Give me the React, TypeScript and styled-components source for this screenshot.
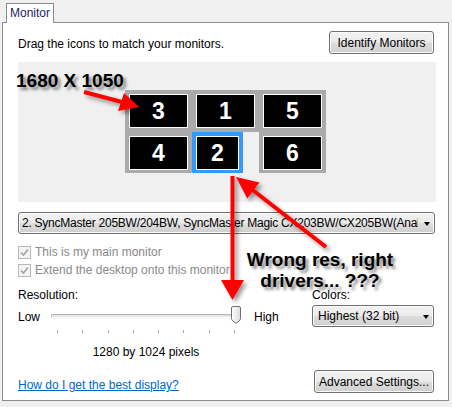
import React from 'react';
import styled, { createGlobalStyle } from 'styled-components';

const Global = createGlobalStyle`
  html, body { margin: 0; padding: 0; background: #f0f0f0; }
  body {
    font-family: "Liberation Sans", Arial, sans-serif;
    font-size: 12px;
    color: #000;
  }
  * { box-sizing: border-box; }
`;

const Page = styled.div`
  position: relative;
  width: 452px;
  height: 407px;
  overflow: hidden;
  background: #f0f0f0;
`;

const TabStrip = styled.div`
  height: 22px;
  display: flex;
  align-items: flex-end;
  padding-left: 6px;
`;

const Tab = styled.div`
  position: relative;
  z-index: 1;
  width: 48px;
  height: 20px;
  margin-bottom: -1px;
  padding: 0 0 2px 3px;
  display: flex;
  align-items: center;
  background: #fff;
  border: 1px solid #898c95;
  border-bottom: none;
  color: #1e1e5a;
`;

const Panel = styled.div`
  margin-left: 2px;
  width: 447px;
  height: 379px;
  border: 1px solid #898c95;
  background: #fff;
  padding: 0 12px 0 15px;
  display: flex;
  flex-direction: column;
`;

const HeaderRow = styled.div`
  margin-top: 8px;
  display: flex;
  justify-content: space-between;
  align-items: center;
`;

const Label = styled.span<{ $muted?: boolean }>`
  line-height: 15px;
  white-space: nowrap;
  color: ${(p) => (p.$muted ? '#8a8a8a' : '#000')};
`;

const Intro = styled(Label)`
  margin-top: 3px;
`;

const Button = styled.button<{ $w: number }>`
  width: ${(p) => p.$w}px;
  height: 23px;
  margin-right: 2px;
  padding: 0;
  border: 1px solid #707070;
  border-radius: 3px;
  background: linear-gradient(#f2f2f2 0%, #ebebeb 48%, #dddddd 52%, #cfcfcf 100%);
  box-shadow: inset 0 0 0 1px #fbfbfb;
  font-family: "Liberation Sans", Arial, sans-serif;
  font-size: 12px;
  color: #000;
`;

const Arrangement = styled.div`
  margin-top: 8px;
  height: 140px;
  background: #f0f0f0;
  padding: 28px 0 0 107px;
  display: flex;
  flex-direction: column;
`;

const TileRow = styled.div<{ $h: number }>`
  display: flex;
  height: ${(p) => p.$h}px;
`;

const Tile = styled.div<{ $w: number; $selected?: boolean; $pb: number }>`
  width: ${(p) => p.$w}px;
  padding: 4px 4px ${(p) => p.$pb}px 4px;
  background: ${(p) => (p.$selected ? '#3399ff' : '#aaaaaa')};
  display: flex;
`;

const Gap = styled.div<{ $w: number }>`
  width: ${(p) => p.$w}px;
`;

const Screen = styled.div`
  flex: 1;
  background: #000;
  border: 1px solid #fff;
  display: flex;
  align-items: center;
  justify-content: center;
  color: #fff;
  font-family: "Liberation Sans", Arial, sans-serif;
  font-weight: bold;
  font-size: 23px;
  line-height: 1;
`;

const Select = styled.div<{ $w?: number }>`
  height: 22px;
  ${(p) => (p.$w ? `width: ${p.$w}px;` : '')}
  border: 1px solid #707070;
  border-radius: 3px;
  background: linear-gradient(#f2f2f2 0%, #ebebeb 48%, #dddddd 52%, #cfcfcf 100%);
  box-shadow: inset 0 0 0 1px #fbfbfb;
  display: flex;
  align-items: center;
  padding: 0 4px 0 4px;
`;

const MonitorSelect = styled(Select)`
  margin-top: 10px;
  margin-right: 1px;
  padding-left: 3px;
`;

const SelectText = styled.span<{ $tight?: boolean }>`
  flex: 1;
  overflow: hidden;
  white-space: nowrap;
  line-height: 15px;
  ${(p) => (p.$tight ? 'letter-spacing: -0.25px;' : '')}
`;

const Caret = styled.span`
  width: 0;
  height: 0;
  margin: 1px 0 0 6px;
  border-left: 3.5px solid transparent;
  border-right: 3.5px solid transparent;
  border-top: 4px solid #000;
`;

const CheckList = styled.div`
  margin-top: 9px;
  display: flex;
  flex-direction: column;
`;

const CheckRow = styled.div`
  height: 18px;
  display: flex;
  align-items: center;
  gap: 4px;
`;

const CheckBox = styled.span`
  width: 13px;
  height: 13px;
  border: 1px solid #b8b8b8;
  background: #f4f4f4;
  display: flex;
  align-items: center;
  justify-content: center;
`;

const LowerGrid = styled.div`
  margin-top: 7px;
  display: grid;
  grid-template-columns: 294px 122px;
  grid-template-rows: 18px auto;
`;

const GridLabel = styled.div`
  display: flex;
  align-items: center;
  line-height: 15px;
`;

const SliderColumn = styled.div`
  margin-top: 1px;
  display: flex;
  flex-direction: column;
`;

const SliderRow = styled.div`
  height: 22px;
  display: flex;
  align-items: center;
`;

const SideLabel = styled.span<{ $w?: number; $ml?: number }>`
  ${(p) => (p.$w ? `width: ${p.$w}px;` : '')}
  margin-left: ${(p) => p.$ml ?? 0}px;
  line-height: 15px;
  padding-top: 2px;
`;

const Track = styled.div`
  position: relative;
  width: 190px;
  height: 4px;
  border-top: 1px solid #b4b4b4;
  border-left: 1px solid #c8c8c8;
  background: #e6e6e6;
  border-bottom: 1px solid #ffffff;
  box-shadow: 0 1px 0 #f4f4f4;
`;

const Thumb = styled.svg`
  position: absolute;
  top: -9px;
  width: 10px;
  height: 18px;
`;

const Ticks = styled.div`
  margin: 3px 0 0 39px;
  width: 178px;
  height: 3px;
  display: flex;
  justify-content: space-between;
`;

const Tick = styled.span`
  width: 1px;
  height: 3px;
  background: #a7a7a7;
`;

const PixelText = styled.div`
  margin: 12px 0 0 33px;
  width: 190px;
  text-align: center;
  line-height: 15px;
`;

const ColorSelect = styled(Select)`
  margin-top: 1px;
  padding-left: 5px;
`;

const BottomRow = styled.div`
  margin-top: 10px;
  display: flex;
  justify-content: space-between;
  align-items: flex-end;
`;

const Link = styled.a`
  color: #0066cc;
  text-decoration: underline;
  line-height: 15px;
  cursor: pointer;
`;

const Overlay = styled.svg`
  position: absolute;
  left: 0;
  top: 0;
  width: 452px;
  height: 407px;
  pointer-events: none;
`;

const Note = styled.div<{ $x: number; $y: number; $w: number; $align?: string }>`
  position: absolute;
  left: ${(p) => p.$x}px;
  top: ${(p) => p.$y}px;
  width: ${(p) => p.$w}px;
  text-align: ${(p) => p.$align ?? 'center'};
  font-family: "Liberation Sans", Arial, sans-serif;
  font-weight: bold;
  font-size: 19px;
  line-height: 21px;
  color: #000;
  text-shadow: 3px 3px 3px rgba(0, 0, 0, 0.45);
  white-space: nowrap;
  pointer-events: none;
`;

const ticks = Array.from({ length: 8 });

function Check() {
  return (
    <CheckBox>
      <svg width="9" height="9" viewBox="0 0 9 9">
        <path d="M1 4.5 L3.5 7 L8 1.5" fill="none" stroke="#a2a2a2" strokeWidth="1.6" />
      </svg>
    </CheckBox>
  );
}

export default function App() {
  const thumbLeft = 179;
  return (
    <Page>
      <Global />
      <TabStrip>
        <Tab>Monitor</Tab>
      </TabStrip>
      <Panel>
        <HeaderRow>
          <Intro>Drag the icons to match your monitors.</Intro>
          <Button $w={105}>Identify Monitors</Button>
        </HeaderRow>

        <Arrangement>
          <TileRow $h={42}>
            <Tile $w={67} $pb={4}><Screen>3</Screen></Tile>
            <Tile $w={67} $pb={4}><Screen>1</Screen></Tile>
            <Tile $w={67} $pb={4}><Screen>5</Screen></Tile>
          </TileRow>
          <TileRow $h={41}>
            <Tile $w={67} $pb={3}><Screen>4</Screen></Tile>
            <Tile $w={51} $pb={3} $selected><Screen>2</Screen></Tile>
            <Gap $w={16} />
            <Tile $w={67} $pb={3}><Screen>6</Screen></Tile>
          </TileRow>
        </Arrangement>

        <MonitorSelect>
          <SelectText $tight>2. SyncMaster 205BW/204BW, SyncMaster Magic CX203BW/CX205BW(Anal</SelectText>
          <Caret />
        </MonitorSelect>

        <CheckList>
          <CheckRow>
            <Check />
            <Label $muted>This is my main monitor</Label>
          </CheckRow>
          <CheckRow>
            <Check />
            <Label $muted>Extend the desktop onto this monitor</Label>
          </CheckRow>
        </CheckList>

        <LowerGrid>
          <GridLabel>Resolution:</GridLabel>
          <GridLabel>Colors:</GridLabel>
          <SliderColumn>
            <SliderRow>
              <SideLabel $w={33}>Low</SideLabel>
              <Track>
                <Thumb style={{ left: thumbLeft }} viewBox="0 0 10 18">
                  <defs>
                    <linearGradient id="tg" x1="0" y1="0" x2="1" y2="0">
                      <stop offset="0" stopColor="#ffffff" />
                      <stop offset="1" stopColor="#dcdcdc" />
                    </linearGradient>
                  </defs>
                  <path
                    d="M0.5 2 Q0.5 0.5 2 0.5 H8 Q9.5 0.5 9.5 2 V12.5 Q9.5 14 8 15.2 L5 17.3 L2 15.2 Q0.5 14 0.5 12.5 Z"
                    fill="url(#tg)"
                    stroke="#707070"
                  />
                </Thumb>
              </Track>
              <SideLabel $ml={13}>High</SideLabel>
            </SliderRow>
            <Ticks>
              {ticks.map((_, i) => (
                <Tick key={i} />
              ))}
            </Ticks>
            <PixelText>1280 by 1024 pixels</PixelText>
          </SliderColumn>
          <div>
            <ColorSelect>
              <SelectText>Highest (32 bit)</SelectText>
              <Caret />
            </ColorSelect>
          </div>
        </LowerGrid>

        <BottomRow>
          <Link>How do I get the best display?</Link>
          <Button $w={120}>Advanced Settings...</Button>
        </BottomRow>
      </Panel>

      <Note $x={16} $y={70} $w={120} $align="left">1680 X 1050</Note>
      <Note $x={240} $y={249} $w={160}>
        Wrong res, right
        <br />
        drivers... ???
      </Note>

      <Overlay viewBox="0 0 452 407">
        <defs>
          <filter id="sh" x="-30%" y="-30%" width="160%" height="160%">
            <feDropShadow dx="3" dy="3" stdDeviation="2" floodColor="#000" floodOpacity="0.4" />
          </filter>
        </defs>
        <g filter="url(#sh)" fill="#ff0000" stroke="#ff0000">
          <line x1="84" y1="92" x2="122" y2="102" strokeWidth="4" />
          <polygon points="139,107 118,111 124,93" stroke="none" />
          <line x1="232.5" y1="176" x2="232.5" y2="284" strokeWidth="4" />
          <polygon points="232.5,300 221,280 244,280" stroke="none" />
          <line x1="326" y1="247" x2="252" y2="189.5" strokeWidth="4" />
          <polygon points="236,177 259.5,182.6 247.3,198.4" stroke="none" />
        </g>
      </Overlay>
    </Page>
  );
}
